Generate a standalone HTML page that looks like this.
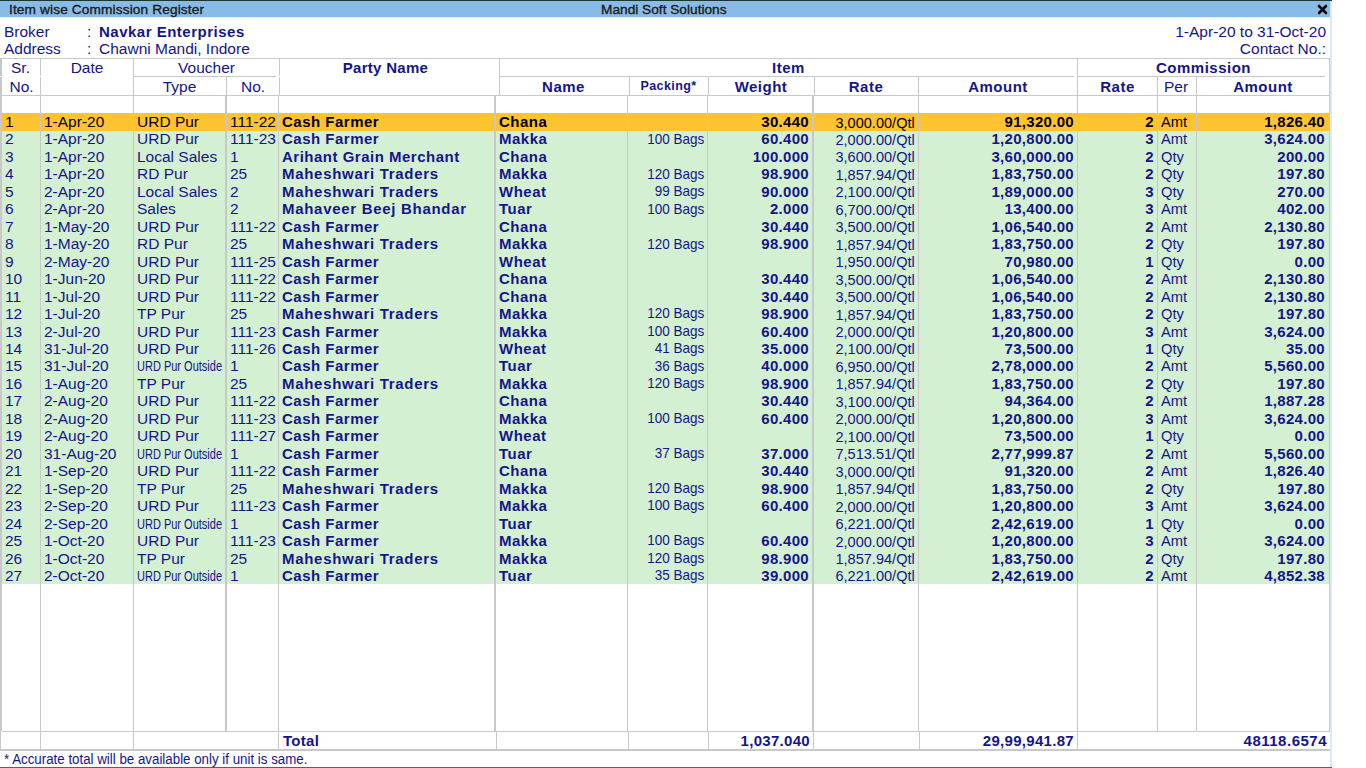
<!DOCTYPE html>
<html><head><meta charset="utf-8"><style>
html,body{margin:0;padding:0}
body{width:1366px;height:768px;position:relative;overflow:hidden;background:#fff;font-family:"Liberation Sans",sans-serif}
.n,.b,.ttl{position:absolute;white-space:pre;line-height:17.46px;color:#15158a}
.n{font-size:15.5px}
.b{font-size:15px;font-weight:bold;letter-spacing:0.5px}
.ttl{font-size:13.7px;color:#1a1a1a;line-height:17px;-webkit-text-stroke:0.35px #1a1a1a}
</style></head><body>
<div style="position:absolute;left:0px;top:0px;width:1332px;height:1px;background:#213434"></div>
<div style="position:absolute;left:0px;top:1px;width:1330px;height:16px;background:#88bce6"></div>
<div style="position:absolute;left:0px;top:17px;width:1330px;height:1px;background:#e6f1fb"></div>
<div style="position:absolute;left:1330px;top:1px;width:2px;height:766px;background:#d8e9f8"></div>
<div style="position:absolute;left:0px;top:767px;width:1332px;height:1px;background:#5e5e5e"></div>
<div class="ttl" style="left:9px;top:1px;letter-spacing:0.12px">Item wise Commission Register</div>
<div class="ttl" style="left:601px;top:1px">Mandi Soft Solutions</div>
<svg style="position:absolute;left:1317px;top:4px" width="11" height="11" viewBox="0 0 11 11"><path d="M2 2 L9 9 M9 2 L2 9" stroke="#000" stroke-width="2.6" stroke-linecap="round"/></svg>
<div class="n" style="left:4px;top:22.7px;">Broker</div>
<div class="n" style="left:87px;top:22.7px;">:</div>
<div class="b" style="left:99px;top:22.7px;">Navkar Enterprises</div>
<div class="n" style="left:4px;top:39.9px;">Address</div>
<div class="n" style="left:87px;top:39.9px;">:</div>
<div class="n" style="left:99px;top:39.9px;">Chawni Mandi, Indore</div>
<div class="n" style="right:40px;top:22.7px;text-align:right;">1-Apr-20 to 31-Oct-20</div>
<div class="n" style="right:40px;top:39.9px;text-align:right;">Contact No.:</div>
<div style="position:absolute;left:0px;top:58px;width:1330px;height:1px;background:#c8c8c8"></div>
<div style="position:absolute;left:0px;top:58px;width:2px;height:673px;background:#c8c8c8"></div>
<div style="position:absolute;left:40px;top:58px;width:1px;height:37px;background:#c8c8c8"></div>
<div style="position:absolute;left:133px;top:58px;width:1px;height:37px;background:#c8c8c8"></div>
<div style="position:absolute;left:279px;top:58px;width:1px;height:37px;background:#c8c8c8"></div>
<div style="position:absolute;left:499px;top:58px;width:1px;height:37px;background:#c8c8c8"></div>
<div style="position:absolute;left:1077px;top:58px;width:1px;height:37px;background:#c8c8c8"></div>
<div style="position:absolute;left:1329px;top:58px;width:1px;height:37px;background:#c8c8c8"></div>
<div style="position:absolute;left:226px;top:76px;width:1px;height:19px;background:#c8c8c8"></div>
<div style="position:absolute;left:629px;top:76px;width:1px;height:19px;background:#c8c8c8"></div>
<div style="position:absolute;left:708px;top:76px;width:1px;height:19px;background:#c8c8c8"></div>
<div style="position:absolute;left:814px;top:76px;width:1px;height:19px;background:#c8c8c8"></div>
<div style="position:absolute;left:918px;top:76px;width:1px;height:19px;background:#c8c8c8"></div>
<div style="position:absolute;left:1157px;top:76px;width:1px;height:19px;background:#c8c8c8"></div>
<div style="position:absolute;left:1196px;top:76px;width:1px;height:19px;background:#c8c8c8"></div>
<div style="position:absolute;left:133px;top:76px;width:143px;height:1px;background:#c8c8c8"></div>
<div style="position:absolute;left:499px;top:76px;width:575px;height:1px;background:#c8c8c8"></div>
<div style="position:absolute;left:1077px;top:76px;width:248px;height:1px;background:#c8c8c8"></div>
<div style="position:absolute;left:0px;top:95px;width:1330px;height:1px;background:#c8c8c8"></div>
<div style="position:absolute;left:0px;top:76px;width:2px;height:1px;background:#ffffff"></div>
<div style="position:absolute;left:40px;top:76px;width:1px;height:1px;background:#ffffff"></div>
<div style="position:absolute;left:279px;top:76px;width:1px;height:1px;background:#ffffff"></div>
<div class="n" style="left:-129.5px;width:300px;top:59px;text-align:center;">Sr.</div>
<div class="n" style="left:-128.5px;width:300px;top:77.5px;text-align:center;">No.</div>
<div class="n" style="left:-63px;width:300px;top:59px;text-align:center;">Date</div>
<div class="n" style="left:56.5px;width:300px;top:59px;text-align:center;">Voucher</div>
<div class="n" style="left:29.5px;width:300px;top:77.5px;text-align:center;">Type</div>
<div class="n" style="left:103px;width:300px;top:77.5px;text-align:center;">No.</div>
<div class="b" style="left:235.5px;width:300px;top:59px;text-align:center;letter-spacing:0.3px">Party Name</div>
<div class="b" style="left:638.5px;width:300px;top:59px;text-align:center;">Item</div>
<div class="b" style="left:413.5px;width:300px;top:77.5px;text-align:center;">Name</div>
<div class="b" style="left:518.5px;width:300px;top:77.5px;text-align:center;font-size:12.5px;letter-spacing:0.4px">Packing*</div>
<div class="b" style="left:611px;width:300px;top:77.5px;text-align:center;">Weight</div>
<div class="b" style="left:716px;width:300px;top:77.5px;text-align:center;">Rate</div>
<div class="b" style="left:848px;width:300px;top:77.5px;text-align:center;">Amount</div>
<div class="b" style="left:1053.5px;width:300px;top:59px;text-align:center;">Commission</div>
<div class="b" style="left:967.5px;width:300px;top:77.5px;text-align:center;">Rate</div>
<div class="n" style="left:1026px;width:300px;top:77.5px;text-align:center;">Per</div>
<div class="b" style="left:1113px;width:300px;top:77.5px;text-align:center;">Amount</div>
<div style="position:absolute;left:2px;top:113px;width:1327px;height:18px;background:#fdc42f"></div>
<div style="position:absolute;left:2px;top:131px;width:1327px;height:453px;background:#d3f0d3"></div>
<div style="position:absolute;left:40px;top:95px;width:1px;height:636px;background:#c8c8c8"></div>
<div style="position:absolute;left:133px;top:95px;width:1px;height:636px;background:#c8c8c8"></div>
<div style="position:absolute;left:225px;top:95px;width:2px;height:636px;background:#c8c8c8"></div>
<div style="position:absolute;left:278px;top:95px;width:1px;height:636px;background:#c8c8c8"></div>
<div style="position:absolute;left:494px;top:95px;width:2px;height:636px;background:#c8c8c8"></div>
<div style="position:absolute;left:627px;top:95px;width:1px;height:636px;background:#c8c8c8"></div>
<div style="position:absolute;left:707px;top:95px;width:1px;height:636px;background:#c8c8c8"></div>
<div style="position:absolute;left:812px;top:95px;width:2px;height:636px;background:#c8c8c8"></div>
<div style="position:absolute;left:918px;top:95px;width:1px;height:636px;background:#c8c8c8"></div>
<div style="position:absolute;left:1077px;top:95px;width:1px;height:636px;background:#c8c8c8"></div>
<div style="position:absolute;left:1157px;top:95px;width:1px;height:636px;background:#c8c8c8"></div>
<div style="position:absolute;left:1196px;top:95px;width:1px;height:636px;background:#c8c8c8"></div>
<div style="position:absolute;left:1329px;top:95px;width:1px;height:636px;background:#c8c8c8"></div>
<div class="n" style="left:5px;top:113.0px;color:#000;">1</div>
<div class="n" style="left:44px;top:113.0px;color:#000;">1-Apr-20</div>
<div class="n" style="left:137px;top:113.0px;color:#000;">URD Pur</div>
<div class="n" style="left:230px;top:113.0px;color:#000;">111-22</div>
<div class="b" style="left:282px;top:113.0px;color:#000;">Cash Farmer</div>
<div class="b" style="left:499px;top:113.0px;color:#000;">Chana</div>
<div class="b" style="right:557px;top:113.0px;text-align:right;color:#000;letter-spacing:0.3px">30.440</div>
<div class="n" style="right:451px;top:113.5px;text-align:right;color:#000;font-size:15px;transform:scaleX(0.97);transform-origin:100% 0">3,000.00/Qtl</div>
<div class="b" style="right:292px;top:113.0px;text-align:right;color:#000;letter-spacing:0.3px">91,320.00</div>
<div class="b" style="right:212px;top:113.0px;text-align:right;color:#000;">2</div>
<div class="n" style="left:1161px;top:113.0px;color:#000;transform:scaleX(0.95);transform-origin:0 0">Amt</div>
<div class="b" style="right:41px;top:113.0px;text-align:right;color:#000;letter-spacing:0.3px">1,826.40</div>
<div class="n" style="left:5px;top:130.46px;color:#15158a;">2</div>
<div class="n" style="left:44px;top:130.46px;color:#15158a;">1-Apr-20</div>
<div class="n" style="left:137px;top:130.46px;color:#15158a;">URD Pur</div>
<div class="n" style="left:230px;top:130.46px;color:#15158a;">111-23</div>
<div class="b" style="left:282px;top:130.46px;color:#15158a;">Cash Farmer</div>
<div class="b" style="left:499px;top:130.46px;color:#15158a;">Makka</div>
<div class="n" style="right:662px;top:130.76000000000002px;text-align:right;color:#15158a;font-size:14.5px;transform:scaleX(0.93);transform-origin:100% 0">100 Bags</div>
<div class="b" style="right:557px;top:130.46px;text-align:right;color:#15158a;letter-spacing:0.3px">60.400</div>
<div class="n" style="right:451px;top:130.96px;text-align:right;color:#15158a;font-size:15px;transform:scaleX(0.97);transform-origin:100% 0">2,000.00/Qtl</div>
<div class="b" style="right:292px;top:130.46px;text-align:right;color:#15158a;letter-spacing:0.3px">1,20,800.00</div>
<div class="b" style="right:212px;top:130.46px;text-align:right;color:#15158a;">3</div>
<div class="n" style="left:1161px;top:130.46px;color:#15158a;transform:scaleX(0.95);transform-origin:0 0">Amt</div>
<div class="b" style="right:41px;top:130.46px;text-align:right;color:#15158a;letter-spacing:0.3px">3,624.00</div>
<div class="n" style="left:5px;top:147.92px;color:#15158a;">3</div>
<div class="n" style="left:44px;top:147.92px;color:#15158a;">1-Apr-20</div>
<div class="n" style="left:137px;top:147.92px;color:#15158a;">Local Sales</div>
<div class="n" style="left:230px;top:147.92px;color:#15158a;">1</div>
<div class="b" style="left:282px;top:147.92px;color:#15158a;">Arihant Grain Merchant</div>
<div class="b" style="left:499px;top:147.92px;color:#15158a;">Chana</div>
<div class="b" style="right:557px;top:147.92px;text-align:right;color:#15158a;letter-spacing:0.3px">100.000</div>
<div class="n" style="right:451px;top:148.42px;text-align:right;color:#15158a;font-size:15px;transform:scaleX(0.97);transform-origin:100% 0">3,600.00/Qtl</div>
<div class="b" style="right:292px;top:147.92px;text-align:right;color:#15158a;letter-spacing:0.3px">3,60,000.00</div>
<div class="b" style="right:212px;top:147.92px;text-align:right;color:#15158a;">2</div>
<div class="n" style="left:1161px;top:147.92px;color:#15158a;transform:scaleX(0.95);transform-origin:0 0">Qty</div>
<div class="b" style="right:41px;top:147.92px;text-align:right;color:#15158a;letter-spacing:0.3px">200.00</div>
<div class="n" style="left:5px;top:165.38px;color:#15158a;">4</div>
<div class="n" style="left:44px;top:165.38px;color:#15158a;">1-Apr-20</div>
<div class="n" style="left:137px;top:165.38px;color:#15158a;">RD Pur</div>
<div class="n" style="left:230px;top:165.38px;color:#15158a;">25</div>
<div class="b" style="left:282px;top:165.38px;color:#15158a;letter-spacing:0.7px;">Maheshwari Traders</div>
<div class="b" style="left:499px;top:165.38px;color:#15158a;">Makka</div>
<div class="n" style="right:662px;top:165.68px;text-align:right;color:#15158a;font-size:14.5px;transform:scaleX(0.93);transform-origin:100% 0">120 Bags</div>
<div class="b" style="right:557px;top:165.38px;text-align:right;color:#15158a;letter-spacing:0.3px">98.900</div>
<div class="n" style="right:451px;top:165.88px;text-align:right;color:#15158a;font-size:15px;transform:scaleX(0.97);transform-origin:100% 0">1,857.94/Qtl</div>
<div class="b" style="right:292px;top:165.38px;text-align:right;color:#15158a;letter-spacing:0.3px">1,83,750.00</div>
<div class="b" style="right:212px;top:165.38px;text-align:right;color:#15158a;">2</div>
<div class="n" style="left:1161px;top:165.38px;color:#15158a;transform:scaleX(0.95);transform-origin:0 0">Qty</div>
<div class="b" style="right:41px;top:165.38px;text-align:right;color:#15158a;letter-spacing:0.3px">197.80</div>
<div class="n" style="left:5px;top:182.84px;color:#15158a;">5</div>
<div class="n" style="left:44px;top:182.84px;color:#15158a;">2-Apr-20</div>
<div class="n" style="left:137px;top:182.84px;color:#15158a;">Local Sales</div>
<div class="n" style="left:230px;top:182.84px;color:#15158a;">2</div>
<div class="b" style="left:282px;top:182.84px;color:#15158a;letter-spacing:0.7px;">Maheshwari Traders</div>
<div class="b" style="left:499px;top:182.84px;color:#15158a;">Wheat</div>
<div class="n" style="right:662px;top:183.14000000000001px;text-align:right;color:#15158a;font-size:14.5px;transform:scaleX(0.93);transform-origin:100% 0">99 Bags</div>
<div class="b" style="right:557px;top:182.84px;text-align:right;color:#15158a;letter-spacing:0.3px">90.000</div>
<div class="n" style="right:451px;top:183.34px;text-align:right;color:#15158a;font-size:15px;transform:scaleX(0.97);transform-origin:100% 0">2,100.00/Qtl</div>
<div class="b" style="right:292px;top:182.84px;text-align:right;color:#15158a;letter-spacing:0.3px">1,89,000.00</div>
<div class="b" style="right:212px;top:182.84px;text-align:right;color:#15158a;">3</div>
<div class="n" style="left:1161px;top:182.84px;color:#15158a;transform:scaleX(0.95);transform-origin:0 0">Qty</div>
<div class="b" style="right:41px;top:182.84px;text-align:right;color:#15158a;letter-spacing:0.3px">270.00</div>
<div class="n" style="left:5px;top:200.3px;color:#15158a;">6</div>
<div class="n" style="left:44px;top:200.3px;color:#15158a;">2-Apr-20</div>
<div class="n" style="left:137px;top:200.3px;color:#15158a;">Sales</div>
<div class="n" style="left:230px;top:200.3px;color:#15158a;">2</div>
<div class="b" style="left:282px;top:200.3px;color:#15158a;letter-spacing:0.7px;">Mahaveer Beej Bhandar</div>
<div class="b" style="left:499px;top:200.3px;color:#15158a;">Tuar</div>
<div class="n" style="right:662px;top:200.60000000000002px;text-align:right;color:#15158a;font-size:14.5px;transform:scaleX(0.93);transform-origin:100% 0">100 Bags</div>
<div class="b" style="right:557px;top:200.3px;text-align:right;color:#15158a;letter-spacing:0.3px">2.000</div>
<div class="n" style="right:451px;top:200.8px;text-align:right;color:#15158a;font-size:15px;transform:scaleX(0.97);transform-origin:100% 0">6,700.00/Qtl</div>
<div class="b" style="right:292px;top:200.3px;text-align:right;color:#15158a;letter-spacing:0.3px">13,400.00</div>
<div class="b" style="right:212px;top:200.3px;text-align:right;color:#15158a;">3</div>
<div class="n" style="left:1161px;top:200.3px;color:#15158a;transform:scaleX(0.95);transform-origin:0 0">Amt</div>
<div class="b" style="right:41px;top:200.3px;text-align:right;color:#15158a;letter-spacing:0.3px">402.00</div>
<div class="n" style="left:5px;top:217.76px;color:#15158a;">7</div>
<div class="n" style="left:44px;top:217.76px;color:#15158a;">1-May-20</div>
<div class="n" style="left:137px;top:217.76px;color:#15158a;">URD Pur</div>
<div class="n" style="left:230px;top:217.76px;color:#15158a;">111-22</div>
<div class="b" style="left:282px;top:217.76px;color:#15158a;">Cash Farmer</div>
<div class="b" style="left:499px;top:217.76px;color:#15158a;">Chana</div>
<div class="b" style="right:557px;top:217.76px;text-align:right;color:#15158a;letter-spacing:0.3px">30.440</div>
<div class="n" style="right:451px;top:218.26px;text-align:right;color:#15158a;font-size:15px;transform:scaleX(0.97);transform-origin:100% 0">3,500.00/Qtl</div>
<div class="b" style="right:292px;top:217.76px;text-align:right;color:#15158a;letter-spacing:0.3px">1,06,540.00</div>
<div class="b" style="right:212px;top:217.76px;text-align:right;color:#15158a;">2</div>
<div class="n" style="left:1161px;top:217.76px;color:#15158a;transform:scaleX(0.95);transform-origin:0 0">Amt</div>
<div class="b" style="right:41px;top:217.76px;text-align:right;color:#15158a;letter-spacing:0.3px">2,130.80</div>
<div class="n" style="left:5px;top:235.22px;color:#15158a;">8</div>
<div class="n" style="left:44px;top:235.22px;color:#15158a;">1-May-20</div>
<div class="n" style="left:137px;top:235.22px;color:#15158a;">RD Pur</div>
<div class="n" style="left:230px;top:235.22px;color:#15158a;">25</div>
<div class="b" style="left:282px;top:235.22px;color:#15158a;letter-spacing:0.7px;">Maheshwari Traders</div>
<div class="b" style="left:499px;top:235.22px;color:#15158a;">Makka</div>
<div class="n" style="right:662px;top:235.52px;text-align:right;color:#15158a;font-size:14.5px;transform:scaleX(0.93);transform-origin:100% 0">120 Bags</div>
<div class="b" style="right:557px;top:235.22px;text-align:right;color:#15158a;letter-spacing:0.3px">98.900</div>
<div class="n" style="right:451px;top:235.72px;text-align:right;color:#15158a;font-size:15px;transform:scaleX(0.97);transform-origin:100% 0">1,857.94/Qtl</div>
<div class="b" style="right:292px;top:235.22px;text-align:right;color:#15158a;letter-spacing:0.3px">1,83,750.00</div>
<div class="b" style="right:212px;top:235.22px;text-align:right;color:#15158a;">2</div>
<div class="n" style="left:1161px;top:235.22px;color:#15158a;transform:scaleX(0.95);transform-origin:0 0">Qty</div>
<div class="b" style="right:41px;top:235.22px;text-align:right;color:#15158a;letter-spacing:0.3px">197.80</div>
<div class="n" style="left:5px;top:252.68px;color:#15158a;">9</div>
<div class="n" style="left:44px;top:252.68px;color:#15158a;">2-May-20</div>
<div class="n" style="left:137px;top:252.68px;color:#15158a;">URD Pur</div>
<div class="n" style="left:230px;top:252.68px;color:#15158a;">111-25</div>
<div class="b" style="left:282px;top:252.68px;color:#15158a;">Cash Farmer</div>
<div class="b" style="left:499px;top:252.68px;color:#15158a;">Wheat</div>
<div class="n" style="right:451px;top:253.18px;text-align:right;color:#15158a;font-size:15px;transform:scaleX(0.97);transform-origin:100% 0">1,950.00/Qtl</div>
<div class="b" style="right:292px;top:252.68px;text-align:right;color:#15158a;letter-spacing:0.3px">70,980.00</div>
<div class="b" style="right:212px;top:252.68px;text-align:right;color:#15158a;">1</div>
<div class="n" style="left:1161px;top:252.68px;color:#15158a;transform:scaleX(0.95);transform-origin:0 0">Qty</div>
<div class="b" style="right:41px;top:252.68px;text-align:right;color:#15158a;letter-spacing:0.3px">0.00</div>
<div class="n" style="left:5px;top:270.14px;color:#15158a;">10</div>
<div class="n" style="left:44px;top:270.14px;color:#15158a;">1-Jun-20</div>
<div class="n" style="left:137px;top:270.14px;color:#15158a;">URD Pur</div>
<div class="n" style="left:230px;top:270.14px;color:#15158a;">111-22</div>
<div class="b" style="left:282px;top:270.14px;color:#15158a;">Cash Farmer</div>
<div class="b" style="left:499px;top:270.14px;color:#15158a;">Chana</div>
<div class="b" style="right:557px;top:270.14px;text-align:right;color:#15158a;letter-spacing:0.3px">30.440</div>
<div class="n" style="right:451px;top:270.64px;text-align:right;color:#15158a;font-size:15px;transform:scaleX(0.97);transform-origin:100% 0">3,500.00/Qtl</div>
<div class="b" style="right:292px;top:270.14px;text-align:right;color:#15158a;letter-spacing:0.3px">1,06,540.00</div>
<div class="b" style="right:212px;top:270.14px;text-align:right;color:#15158a;">2</div>
<div class="n" style="left:1161px;top:270.14px;color:#15158a;transform:scaleX(0.95);transform-origin:0 0">Amt</div>
<div class="b" style="right:41px;top:270.14px;text-align:right;color:#15158a;letter-spacing:0.3px">2,130.80</div>
<div class="n" style="left:5px;top:287.6px;color:#15158a;">11</div>
<div class="n" style="left:44px;top:287.6px;color:#15158a;">1-Jul-20</div>
<div class="n" style="left:137px;top:287.6px;color:#15158a;">URD Pur</div>
<div class="n" style="left:230px;top:287.6px;color:#15158a;">111-22</div>
<div class="b" style="left:282px;top:287.6px;color:#15158a;">Cash Farmer</div>
<div class="b" style="left:499px;top:287.6px;color:#15158a;">Chana</div>
<div class="b" style="right:557px;top:287.6px;text-align:right;color:#15158a;letter-spacing:0.3px">30.440</div>
<div class="n" style="right:451px;top:288.1px;text-align:right;color:#15158a;font-size:15px;transform:scaleX(0.97);transform-origin:100% 0">3,500.00/Qtl</div>
<div class="b" style="right:292px;top:287.6px;text-align:right;color:#15158a;letter-spacing:0.3px">1,06,540.00</div>
<div class="b" style="right:212px;top:287.6px;text-align:right;color:#15158a;">2</div>
<div class="n" style="left:1161px;top:287.6px;color:#15158a;transform:scaleX(0.95);transform-origin:0 0">Amt</div>
<div class="b" style="right:41px;top:287.6px;text-align:right;color:#15158a;letter-spacing:0.3px">2,130.80</div>
<div class="n" style="left:5px;top:305.06px;color:#15158a;">12</div>
<div class="n" style="left:44px;top:305.06px;color:#15158a;">1-Jul-20</div>
<div class="n" style="left:137px;top:305.06px;color:#15158a;">TP Pur</div>
<div class="n" style="left:230px;top:305.06px;color:#15158a;">25</div>
<div class="b" style="left:282px;top:305.06px;color:#15158a;letter-spacing:0.7px;">Maheshwari Traders</div>
<div class="b" style="left:499px;top:305.06px;color:#15158a;">Makka</div>
<div class="n" style="right:662px;top:305.36px;text-align:right;color:#15158a;font-size:14.5px;transform:scaleX(0.93);transform-origin:100% 0">120 Bags</div>
<div class="b" style="right:557px;top:305.06px;text-align:right;color:#15158a;letter-spacing:0.3px">98.900</div>
<div class="n" style="right:451px;top:305.56px;text-align:right;color:#15158a;font-size:15px;transform:scaleX(0.97);transform-origin:100% 0">1,857.94/Qtl</div>
<div class="b" style="right:292px;top:305.06px;text-align:right;color:#15158a;letter-spacing:0.3px">1,83,750.00</div>
<div class="b" style="right:212px;top:305.06px;text-align:right;color:#15158a;">2</div>
<div class="n" style="left:1161px;top:305.06px;color:#15158a;transform:scaleX(0.95);transform-origin:0 0">Qty</div>
<div class="b" style="right:41px;top:305.06px;text-align:right;color:#15158a;letter-spacing:0.3px">197.80</div>
<div class="n" style="left:5px;top:322.52px;color:#15158a;">13</div>
<div class="n" style="left:44px;top:322.52px;color:#15158a;">2-Jul-20</div>
<div class="n" style="left:137px;top:322.52px;color:#15158a;">URD Pur</div>
<div class="n" style="left:230px;top:322.52px;color:#15158a;">111-23</div>
<div class="b" style="left:282px;top:322.52px;color:#15158a;">Cash Farmer</div>
<div class="b" style="left:499px;top:322.52px;color:#15158a;">Makka</div>
<div class="n" style="right:662px;top:322.82px;text-align:right;color:#15158a;font-size:14.5px;transform:scaleX(0.93);transform-origin:100% 0">100 Bags</div>
<div class="b" style="right:557px;top:322.52px;text-align:right;color:#15158a;letter-spacing:0.3px">60.400</div>
<div class="n" style="right:451px;top:323.02px;text-align:right;color:#15158a;font-size:15px;transform:scaleX(0.97);transform-origin:100% 0">2,000.00/Qtl</div>
<div class="b" style="right:292px;top:322.52px;text-align:right;color:#15158a;letter-spacing:0.3px">1,20,800.00</div>
<div class="b" style="right:212px;top:322.52px;text-align:right;color:#15158a;">3</div>
<div class="n" style="left:1161px;top:322.52px;color:#15158a;transform:scaleX(0.95);transform-origin:0 0">Amt</div>
<div class="b" style="right:41px;top:322.52px;text-align:right;color:#15158a;letter-spacing:0.3px">3,624.00</div>
<div class="n" style="left:5px;top:339.98px;color:#15158a;">14</div>
<div class="n" style="left:44px;top:339.98px;color:#15158a;">31-Jul-20</div>
<div class="n" style="left:137px;top:339.98px;color:#15158a;">URD Pur</div>
<div class="n" style="left:230px;top:339.98px;color:#15158a;">111-26</div>
<div class="b" style="left:282px;top:339.98px;color:#15158a;">Cash Farmer</div>
<div class="b" style="left:499px;top:339.98px;color:#15158a;">Wheat</div>
<div class="n" style="right:662px;top:340.28000000000003px;text-align:right;color:#15158a;font-size:14.5px;transform:scaleX(0.93);transform-origin:100% 0">41 Bags</div>
<div class="b" style="right:557px;top:339.98px;text-align:right;color:#15158a;letter-spacing:0.3px">35.000</div>
<div class="n" style="right:451px;top:340.48px;text-align:right;color:#15158a;font-size:15px;transform:scaleX(0.97);transform-origin:100% 0">2,100.00/Qtl</div>
<div class="b" style="right:292px;top:339.98px;text-align:right;color:#15158a;letter-spacing:0.3px">73,500.00</div>
<div class="b" style="right:212px;top:339.98px;text-align:right;color:#15158a;">1</div>
<div class="n" style="left:1161px;top:339.98px;color:#15158a;transform:scaleX(0.95);transform-origin:0 0">Qty</div>
<div class="b" style="right:41px;top:339.98px;text-align:right;color:#15158a;letter-spacing:0.3px">35.00</div>
<div class="n" style="left:5px;top:357.44px;color:#15158a;">15</div>
<div class="n" style="left:44px;top:357.44px;color:#15158a;">31-Jul-20</div>
<div class="n" style="left:137px;top:357.44px;color:#15158a;transform:scaleX(0.71);transform-origin:0 0">URD Pur Outside</div>
<div class="n" style="left:230px;top:357.44px;color:#15158a;">1</div>
<div class="b" style="left:282px;top:357.44px;color:#15158a;">Cash Farmer</div>
<div class="b" style="left:499px;top:357.44px;color:#15158a;">Tuar</div>
<div class="n" style="right:662px;top:357.74px;text-align:right;color:#15158a;font-size:14.5px;transform:scaleX(0.93);transform-origin:100% 0">36 Bags</div>
<div class="b" style="right:557px;top:357.44px;text-align:right;color:#15158a;letter-spacing:0.3px">40.000</div>
<div class="n" style="right:451px;top:357.94px;text-align:right;color:#15158a;font-size:15px;transform:scaleX(0.97);transform-origin:100% 0">6,950.00/Qtl</div>
<div class="b" style="right:292px;top:357.44px;text-align:right;color:#15158a;letter-spacing:0.3px">2,78,000.00</div>
<div class="b" style="right:212px;top:357.44px;text-align:right;color:#15158a;">2</div>
<div class="n" style="left:1161px;top:357.44px;color:#15158a;transform:scaleX(0.95);transform-origin:0 0">Amt</div>
<div class="b" style="right:41px;top:357.44px;text-align:right;color:#15158a;letter-spacing:0.3px">5,560.00</div>
<div class="n" style="left:5px;top:374.9px;color:#15158a;">16</div>
<div class="n" style="left:44px;top:374.9px;color:#15158a;">1-Aug-20</div>
<div class="n" style="left:137px;top:374.9px;color:#15158a;">TP Pur</div>
<div class="n" style="left:230px;top:374.9px;color:#15158a;">25</div>
<div class="b" style="left:282px;top:374.9px;color:#15158a;letter-spacing:0.7px;">Maheshwari Traders</div>
<div class="b" style="left:499px;top:374.9px;color:#15158a;">Makka</div>
<div class="n" style="right:662px;top:375.2px;text-align:right;color:#15158a;font-size:14.5px;transform:scaleX(0.93);transform-origin:100% 0">120 Bags</div>
<div class="b" style="right:557px;top:374.9px;text-align:right;color:#15158a;letter-spacing:0.3px">98.900</div>
<div class="n" style="right:451px;top:375.4px;text-align:right;color:#15158a;font-size:15px;transform:scaleX(0.97);transform-origin:100% 0">1,857.94/Qtl</div>
<div class="b" style="right:292px;top:374.9px;text-align:right;color:#15158a;letter-spacing:0.3px">1,83,750.00</div>
<div class="b" style="right:212px;top:374.9px;text-align:right;color:#15158a;">2</div>
<div class="n" style="left:1161px;top:374.9px;color:#15158a;transform:scaleX(0.95);transform-origin:0 0">Qty</div>
<div class="b" style="right:41px;top:374.9px;text-align:right;color:#15158a;letter-spacing:0.3px">197.80</div>
<div class="n" style="left:5px;top:392.36px;color:#15158a;">17</div>
<div class="n" style="left:44px;top:392.36px;color:#15158a;">2-Aug-20</div>
<div class="n" style="left:137px;top:392.36px;color:#15158a;">URD Pur</div>
<div class="n" style="left:230px;top:392.36px;color:#15158a;">111-22</div>
<div class="b" style="left:282px;top:392.36px;color:#15158a;">Cash Farmer</div>
<div class="b" style="left:499px;top:392.36px;color:#15158a;">Chana</div>
<div class="b" style="right:557px;top:392.36px;text-align:right;color:#15158a;letter-spacing:0.3px">30.440</div>
<div class="n" style="right:451px;top:392.86px;text-align:right;color:#15158a;font-size:15px;transform:scaleX(0.97);transform-origin:100% 0">3,100.00/Qtl</div>
<div class="b" style="right:292px;top:392.36px;text-align:right;color:#15158a;letter-spacing:0.3px">94,364.00</div>
<div class="b" style="right:212px;top:392.36px;text-align:right;color:#15158a;">2</div>
<div class="n" style="left:1161px;top:392.36px;color:#15158a;transform:scaleX(0.95);transform-origin:0 0">Amt</div>
<div class="b" style="right:41px;top:392.36px;text-align:right;color:#15158a;letter-spacing:0.3px">1,887.28</div>
<div class="n" style="left:5px;top:409.82px;color:#15158a;">18</div>
<div class="n" style="left:44px;top:409.82px;color:#15158a;">2-Aug-20</div>
<div class="n" style="left:137px;top:409.82px;color:#15158a;">URD Pur</div>
<div class="n" style="left:230px;top:409.82px;color:#15158a;">111-23</div>
<div class="b" style="left:282px;top:409.82px;color:#15158a;">Cash Farmer</div>
<div class="b" style="left:499px;top:409.82px;color:#15158a;">Makka</div>
<div class="n" style="right:662px;top:410.12px;text-align:right;color:#15158a;font-size:14.5px;transform:scaleX(0.93);transform-origin:100% 0">100 Bags</div>
<div class="b" style="right:557px;top:409.82px;text-align:right;color:#15158a;letter-spacing:0.3px">60.400</div>
<div class="n" style="right:451px;top:410.32px;text-align:right;color:#15158a;font-size:15px;transform:scaleX(0.97);transform-origin:100% 0">2,000.00/Qtl</div>
<div class="b" style="right:292px;top:409.82px;text-align:right;color:#15158a;letter-spacing:0.3px">1,20,800.00</div>
<div class="b" style="right:212px;top:409.82px;text-align:right;color:#15158a;">3</div>
<div class="n" style="left:1161px;top:409.82px;color:#15158a;transform:scaleX(0.95);transform-origin:0 0">Amt</div>
<div class="b" style="right:41px;top:409.82px;text-align:right;color:#15158a;letter-spacing:0.3px">3,624.00</div>
<div class="n" style="left:5px;top:427.28px;color:#15158a;">19</div>
<div class="n" style="left:44px;top:427.28px;color:#15158a;">2-Aug-20</div>
<div class="n" style="left:137px;top:427.28px;color:#15158a;">URD Pur</div>
<div class="n" style="left:230px;top:427.28px;color:#15158a;">111-27</div>
<div class="b" style="left:282px;top:427.28px;color:#15158a;">Cash Farmer</div>
<div class="b" style="left:499px;top:427.28px;color:#15158a;">Wheat</div>
<div class="n" style="right:451px;top:427.78px;text-align:right;color:#15158a;font-size:15px;transform:scaleX(0.97);transform-origin:100% 0">2,100.00/Qtl</div>
<div class="b" style="right:292px;top:427.28px;text-align:right;color:#15158a;letter-spacing:0.3px">73,500.00</div>
<div class="b" style="right:212px;top:427.28px;text-align:right;color:#15158a;">1</div>
<div class="n" style="left:1161px;top:427.28px;color:#15158a;transform:scaleX(0.95);transform-origin:0 0">Qty</div>
<div class="b" style="right:41px;top:427.28px;text-align:right;color:#15158a;letter-spacing:0.3px">0.00</div>
<div class="n" style="left:5px;top:444.74px;color:#15158a;">20</div>
<div class="n" style="left:44px;top:444.74px;color:#15158a;">31-Aug-20</div>
<div class="n" style="left:137px;top:444.74px;color:#15158a;transform:scaleX(0.71);transform-origin:0 0">URD Pur Outside</div>
<div class="n" style="left:230px;top:444.74px;color:#15158a;">1</div>
<div class="b" style="left:282px;top:444.74px;color:#15158a;">Cash Farmer</div>
<div class="b" style="left:499px;top:444.74px;color:#15158a;">Tuar</div>
<div class="n" style="right:662px;top:445.04px;text-align:right;color:#15158a;font-size:14.5px;transform:scaleX(0.93);transform-origin:100% 0">37 Bags</div>
<div class="b" style="right:557px;top:444.74px;text-align:right;color:#15158a;letter-spacing:0.3px">37.000</div>
<div class="n" style="right:451px;top:445.24px;text-align:right;color:#15158a;font-size:15px;transform:scaleX(0.97);transform-origin:100% 0">7,513.51/Qtl</div>
<div class="b" style="right:292px;top:444.74px;text-align:right;color:#15158a;letter-spacing:0.3px">2,77,999.87</div>
<div class="b" style="right:212px;top:444.74px;text-align:right;color:#15158a;">2</div>
<div class="n" style="left:1161px;top:444.74px;color:#15158a;transform:scaleX(0.95);transform-origin:0 0">Amt</div>
<div class="b" style="right:41px;top:444.74px;text-align:right;color:#15158a;letter-spacing:0.3px">5,560.00</div>
<div class="n" style="left:5px;top:462.2px;color:#15158a;">21</div>
<div class="n" style="left:44px;top:462.2px;color:#15158a;">1-Sep-20</div>
<div class="n" style="left:137px;top:462.2px;color:#15158a;">URD Pur</div>
<div class="n" style="left:230px;top:462.2px;color:#15158a;">111-22</div>
<div class="b" style="left:282px;top:462.2px;color:#15158a;">Cash Farmer</div>
<div class="b" style="left:499px;top:462.2px;color:#15158a;">Chana</div>
<div class="b" style="right:557px;top:462.2px;text-align:right;color:#15158a;letter-spacing:0.3px">30.440</div>
<div class="n" style="right:451px;top:462.7px;text-align:right;color:#15158a;font-size:15px;transform:scaleX(0.97);transform-origin:100% 0">3,000.00/Qtl</div>
<div class="b" style="right:292px;top:462.2px;text-align:right;color:#15158a;letter-spacing:0.3px">91,320.00</div>
<div class="b" style="right:212px;top:462.2px;text-align:right;color:#15158a;">2</div>
<div class="n" style="left:1161px;top:462.2px;color:#15158a;transform:scaleX(0.95);transform-origin:0 0">Amt</div>
<div class="b" style="right:41px;top:462.2px;text-align:right;color:#15158a;letter-spacing:0.3px">1,826.40</div>
<div class="n" style="left:5px;top:479.66px;color:#15158a;">22</div>
<div class="n" style="left:44px;top:479.66px;color:#15158a;">1-Sep-20</div>
<div class="n" style="left:137px;top:479.66px;color:#15158a;">TP Pur</div>
<div class="n" style="left:230px;top:479.66px;color:#15158a;">25</div>
<div class="b" style="left:282px;top:479.66px;color:#15158a;letter-spacing:0.7px;">Maheshwari Traders</div>
<div class="b" style="left:499px;top:479.66px;color:#15158a;">Makka</div>
<div class="n" style="right:662px;top:479.96000000000004px;text-align:right;color:#15158a;font-size:14.5px;transform:scaleX(0.93);transform-origin:100% 0">120 Bags</div>
<div class="b" style="right:557px;top:479.66px;text-align:right;color:#15158a;letter-spacing:0.3px">98.900</div>
<div class="n" style="right:451px;top:480.16px;text-align:right;color:#15158a;font-size:15px;transform:scaleX(0.97);transform-origin:100% 0">1,857.94/Qtl</div>
<div class="b" style="right:292px;top:479.66px;text-align:right;color:#15158a;letter-spacing:0.3px">1,83,750.00</div>
<div class="b" style="right:212px;top:479.66px;text-align:right;color:#15158a;">2</div>
<div class="n" style="left:1161px;top:479.66px;color:#15158a;transform:scaleX(0.95);transform-origin:0 0">Qty</div>
<div class="b" style="right:41px;top:479.66px;text-align:right;color:#15158a;letter-spacing:0.3px">197.80</div>
<div class="n" style="left:5px;top:497.12px;color:#15158a;">23</div>
<div class="n" style="left:44px;top:497.12px;color:#15158a;">2-Sep-20</div>
<div class="n" style="left:137px;top:497.12px;color:#15158a;">URD Pur</div>
<div class="n" style="left:230px;top:497.12px;color:#15158a;">111-23</div>
<div class="b" style="left:282px;top:497.12px;color:#15158a;">Cash Farmer</div>
<div class="b" style="left:499px;top:497.12px;color:#15158a;">Makka</div>
<div class="n" style="right:662px;top:497.42px;text-align:right;color:#15158a;font-size:14.5px;transform:scaleX(0.93);transform-origin:100% 0">100 Bags</div>
<div class="b" style="right:557px;top:497.12px;text-align:right;color:#15158a;letter-spacing:0.3px">60.400</div>
<div class="n" style="right:451px;top:497.62px;text-align:right;color:#15158a;font-size:15px;transform:scaleX(0.97);transform-origin:100% 0">2,000.00/Qtl</div>
<div class="b" style="right:292px;top:497.12px;text-align:right;color:#15158a;letter-spacing:0.3px">1,20,800.00</div>
<div class="b" style="right:212px;top:497.12px;text-align:right;color:#15158a;">3</div>
<div class="n" style="left:1161px;top:497.12px;color:#15158a;transform:scaleX(0.95);transform-origin:0 0">Amt</div>
<div class="b" style="right:41px;top:497.12px;text-align:right;color:#15158a;letter-spacing:0.3px">3,624.00</div>
<div class="n" style="left:5px;top:514.58px;color:#15158a;">24</div>
<div class="n" style="left:44px;top:514.58px;color:#15158a;">2-Sep-20</div>
<div class="n" style="left:137px;top:514.58px;color:#15158a;transform:scaleX(0.71);transform-origin:0 0">URD Pur Outside</div>
<div class="n" style="left:230px;top:514.58px;color:#15158a;">1</div>
<div class="b" style="left:282px;top:514.58px;color:#15158a;">Cash Farmer</div>
<div class="b" style="left:499px;top:514.58px;color:#15158a;">Tuar</div>
<div class="n" style="right:451px;top:515.08px;text-align:right;color:#15158a;font-size:15px;transform:scaleX(0.97);transform-origin:100% 0">6,221.00/Qtl</div>
<div class="b" style="right:292px;top:514.58px;text-align:right;color:#15158a;letter-spacing:0.3px">2,42,619.00</div>
<div class="b" style="right:212px;top:514.58px;text-align:right;color:#15158a;">1</div>
<div class="n" style="left:1161px;top:514.58px;color:#15158a;transform:scaleX(0.95);transform-origin:0 0">Qty</div>
<div class="b" style="right:41px;top:514.58px;text-align:right;color:#15158a;letter-spacing:0.3px">0.00</div>
<div class="n" style="left:5px;top:532.04px;color:#15158a;">25</div>
<div class="n" style="left:44px;top:532.04px;color:#15158a;">1-Oct-20</div>
<div class="n" style="left:137px;top:532.04px;color:#15158a;">URD Pur</div>
<div class="n" style="left:230px;top:532.04px;color:#15158a;">111-23</div>
<div class="b" style="left:282px;top:532.04px;color:#15158a;">Cash Farmer</div>
<div class="b" style="left:499px;top:532.04px;color:#15158a;">Makka</div>
<div class="n" style="right:662px;top:532.3399999999999px;text-align:right;color:#15158a;font-size:14.5px;transform:scaleX(0.93);transform-origin:100% 0">100 Bags</div>
<div class="b" style="right:557px;top:532.04px;text-align:right;color:#15158a;letter-spacing:0.3px">60.400</div>
<div class="n" style="right:451px;top:532.54px;text-align:right;color:#15158a;font-size:15px;transform:scaleX(0.97);transform-origin:100% 0">2,000.00/Qtl</div>
<div class="b" style="right:292px;top:532.04px;text-align:right;color:#15158a;letter-spacing:0.3px">1,20,800.00</div>
<div class="b" style="right:212px;top:532.04px;text-align:right;color:#15158a;">3</div>
<div class="n" style="left:1161px;top:532.04px;color:#15158a;transform:scaleX(0.95);transform-origin:0 0">Amt</div>
<div class="b" style="right:41px;top:532.04px;text-align:right;color:#15158a;letter-spacing:0.3px">3,624.00</div>
<div class="n" style="left:5px;top:549.5px;color:#15158a;">26</div>
<div class="n" style="left:44px;top:549.5px;color:#15158a;">1-Oct-20</div>
<div class="n" style="left:137px;top:549.5px;color:#15158a;">TP Pur</div>
<div class="n" style="left:230px;top:549.5px;color:#15158a;">25</div>
<div class="b" style="left:282px;top:549.5px;color:#15158a;letter-spacing:0.7px;">Maheshwari Traders</div>
<div class="b" style="left:499px;top:549.5px;color:#15158a;">Makka</div>
<div class="n" style="right:662px;top:549.8px;text-align:right;color:#15158a;font-size:14.5px;transform:scaleX(0.93);transform-origin:100% 0">120 Bags</div>
<div class="b" style="right:557px;top:549.5px;text-align:right;color:#15158a;letter-spacing:0.3px">98.900</div>
<div class="n" style="right:451px;top:550.0px;text-align:right;color:#15158a;font-size:15px;transform:scaleX(0.97);transform-origin:100% 0">1,857.94/Qtl</div>
<div class="b" style="right:292px;top:549.5px;text-align:right;color:#15158a;letter-spacing:0.3px">1,83,750.00</div>
<div class="b" style="right:212px;top:549.5px;text-align:right;color:#15158a;">2</div>
<div class="n" style="left:1161px;top:549.5px;color:#15158a;transform:scaleX(0.95);transform-origin:0 0">Qty</div>
<div class="b" style="right:41px;top:549.5px;text-align:right;color:#15158a;letter-spacing:0.3px">197.80</div>
<div class="n" style="left:5px;top:566.96px;color:#15158a;">27</div>
<div class="n" style="left:44px;top:566.96px;color:#15158a;">2-Oct-20</div>
<div class="n" style="left:137px;top:566.96px;color:#15158a;transform:scaleX(0.71);transform-origin:0 0">URD Pur Outside</div>
<div class="n" style="left:230px;top:566.96px;color:#15158a;">1</div>
<div class="b" style="left:282px;top:566.96px;color:#15158a;">Cash Farmer</div>
<div class="b" style="left:499px;top:566.96px;color:#15158a;">Tuar</div>
<div class="n" style="right:662px;top:567.26px;text-align:right;color:#15158a;font-size:14.5px;transform:scaleX(0.93);transform-origin:100% 0">35 Bags</div>
<div class="b" style="right:557px;top:566.96px;text-align:right;color:#15158a;letter-spacing:0.3px">39.000</div>
<div class="n" style="right:451px;top:567.46px;text-align:right;color:#15158a;font-size:15px;transform:scaleX(0.97);transform-origin:100% 0">6,221.00/Qtl</div>
<div class="b" style="right:292px;top:566.96px;text-align:right;color:#15158a;letter-spacing:0.3px">2,42,619.00</div>
<div class="b" style="right:212px;top:566.96px;text-align:right;color:#15158a;">2</div>
<div class="n" style="left:1161px;top:566.96px;color:#15158a;transform:scaleX(0.95);transform-origin:0 0">Amt</div>
<div class="b" style="right:41px;top:566.96px;text-align:right;color:#15158a;letter-spacing:0.3px">4,852.38</div>
<div style="position:absolute;left:2px;top:731px;width:1328px;height:1px;background:#c8c8c8"></div>
<div style="position:absolute;left:0px;top:731px;width:1px;height:18px;background:#c8c8c8"></div>
<div style="position:absolute;left:40px;top:731px;width:1px;height:18px;background:#c8c8c8"></div>
<div style="position:absolute;left:133px;top:731px;width:1px;height:18px;background:#c8c8c8"></div>
<div style="position:absolute;left:278px;top:731px;width:1px;height:18px;background:#c8c8c8"></div>
<div style="position:absolute;left:496px;top:731px;width:1px;height:18px;background:#c8c8c8"></div>
<div style="position:absolute;left:628px;top:731px;width:1px;height:18px;background:#c8c8c8"></div>
<div style="position:absolute;left:708px;top:731px;width:1px;height:18px;background:#c8c8c8"></div>
<div style="position:absolute;left:813px;top:731px;width:1px;height:18px;background:#c8c8c8"></div>
<div style="position:absolute;left:919px;top:731px;width:1px;height:18px;background:#c8c8c8"></div>
<div style="position:absolute;left:1077px;top:731px;width:1px;height:18px;background:#c8c8c8"></div>
<div style="position:absolute;left:0px;top:749px;width:1330px;height:2px;background:#c8c8c8"></div>
<div class="b" style="left:283px;top:731.5px;letter-spacing:0.3px">Total</div>
<div class="b" style="right:556px;top:731.5px;text-align:right;letter-spacing:0.3px">1,037.040</div>
<div class="b" style="right:292px;top:731.5px;text-align:right;letter-spacing:0.3px">29,99,941.87</div>
<div class="b" style="right:39px;top:731.5px;text-align:right;">48118.6574</div>
<div class="n" style="left:4px;top:750.5px;font-size:13.8px;transform:scaleX(0.965);transform-origin:0 0">* Accurate total will be available only if unit is same.</div>
</body></html>
